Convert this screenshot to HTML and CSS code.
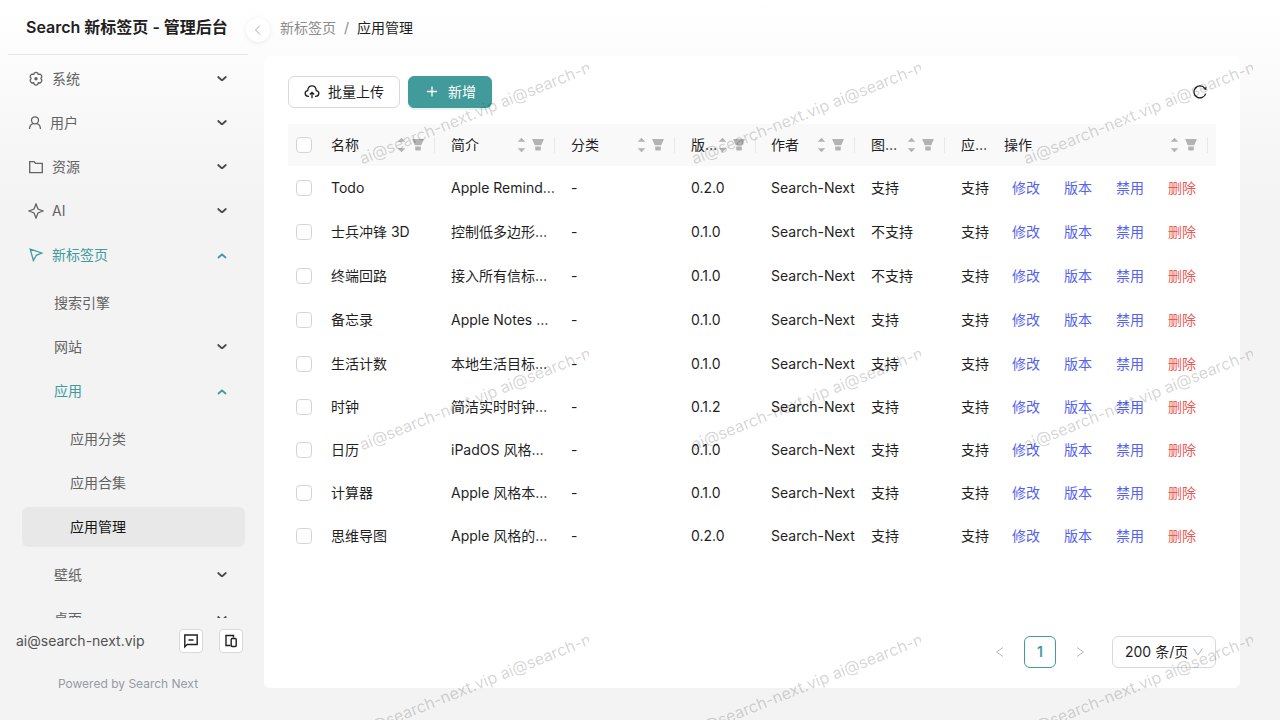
FILE: index.html
```html
<!DOCTYPE html>
<html lang="zh-CN">
<head>
<meta charset="utf-8">
<meta name="viewport" content="width=device-width, initial-scale=1">
<title>Search 新标签页 - 管理后台</title>
<link rel="stylesheet" href="styles.css">
</head>
<body>
<svg class="sprite" aria-hidden="true">
  <symbol id="down" viewBox="0 0 10 10"><path d="M1.200 3L4.200 5.700Q5 6.300 5.800 5.700L8.800 3" fill="none" stroke="currentColor" stroke-width="1.800" stroke-linecap="round"/></symbol>
  <symbol id="up" viewBox="0 0 10 10"><path d="M1.500 7.500L5 4.300L8.500 7.500" fill="none" stroke="currentColor" stroke-width="1.800" stroke-linecap="round" stroke-linejoin="round"/></symbol>
  <symbol id="sort" viewBox="0 0 10 16"><path d="M5.500 .8L9.300 4.800H1.700zM5.500 15.200L9.300 11.200H1.700z" fill="currentColor"/></symbol>
  <symbol id="filter" viewBox="0 0 12 12"><path d="M.6 0H11.400Q12 0 11.800 .6L9.200 6.300H2.800L.2 .6Q0 0 .6 0zM3.200 7.600H8.800V10.800Q8.800 11.600 8 11.600H4Q3.200 11.600 3.200 10.800z" fill="currentColor"/></symbol>
</svg>
<div class="app">
  <aside class="sidebar">
    <h1 class="brand">Search 新标签页 - 管理后台</h1>
    <nav class="nav" aria-label="主菜单">
      <ul class="menu">
        <li><button class="item"><svg class="icon" viewBox="0 0 16 16"><path d="M6.300 2Q8 .9 9.700 2L10.200 3.400L12 3.200Q13.700 4 13.900 5.900L12.900 7.500L13.900 9.100Q13.900 11 12.200 12L10.300 11.800L9.700 13.500Q8 14.700 6.300 13.500L5.700 11.800L3.800 12Q2.100 11 2.100 9.100L3.100 7.500L2.100 5.900Q2.300 4 4 3.200L5.800 3.400z"/><circle cx="8" cy="7.700" r="1.700" class="solid"/></svg><span>系统</span><svg class="arrow"><use href="#down"/></svg></button></li>
        <li><button class="item"><svg class="icon slim" viewBox="0 0 14 16"><circle cx="7" cy="5.300" r="3.500"/><path d="M1.500 14Q1.700 9.300 5.200 8.600M12.500 14Q12.300 9.300 8.800 8.600"/></svg><span>用户</span><svg class="arrow"><use href="#down"/></svg></button></li>
        <li><button class="item"><svg class="icon" viewBox="0 0 16 16"><path d="M1.700 2.700H6L7.600 4.400H14.300V13.600H1.700z"/></svg><span>资源</span><svg class="arrow"><use href="#down"/></svg></button></li>
        <li><button class="item"><svg class="icon" viewBox="0 0 16 16"><path d="M8 1L10 6L15 8L10 10L8 15L6 10L1 8L6 6z"/></svg><span>AI</span><svg class="arrow"><use href="#down"/></svg></button></li>
        <li><button class="item open" aria-expanded="true"><svg class="icon" viewBox="0 0 16 16"><path d="M2.200 2.200L13.800 6L8.300 8.300L5.400 13.500z"/></svg><span>新标签页</span><svg class="arrow"><use href="#up"/></svg></button>
          <ul class="menu sub">
            <li><button class="item">搜索引擎</button></li>
            <li><button class="item"><span>网站</span><svg class="arrow"><use href="#down"/></svg></button></li>
            <li><button class="item open" aria-expanded="true"><span>应用</span><svg class="arrow"><use href="#up"/></svg></button>
              <ul class="menu sub deep">
                <li><button class="item">应用分类</button></li>
                <li><button class="item">应用合集</button></li>
                <li><button class="item current" aria-current="page">应用管理</button></li>
              </ul>
            </li>
            <li><button class="item"><span>壁纸</span><svg class="arrow"><use href="#down"/></svg></button></li>
            <li><button class="item"><span>桌面</span><svg class="arrow"><use href="#down"/></svg></button></li>
          </ul>
        </li>
      </ul>
    </nav>
    <div class="account">
      <span class="email">ai@search-next.vip</span>
      <button class="square" aria-label="消息"><svg viewBox="0 0 16 16"><path d="M1.800 2H14.200V11.500H4.200L1.800 13.800zM5.500 7H10.500"/></svg></button>
      <button class="square" aria-label="设备"><svg viewBox="0 0 16 16"><path d="M10.500 4.500V2.500H3V12.500H7.500"/><rect x="8.200" y="5.500" width="5" height="8" rx="1"/></svg></button>
    </div>
    <p class="powered">Powered by Search Next</p>
    <button class="collapse" aria-label="收起菜单"><svg viewBox="0 0 12 12"><path d="M8 1.500L3.500 6L8 10.500"/></svg></button>
  </aside>
  <main class="main">
    <nav class="crumbs" aria-label="面包屑"><a href="#">新标签页</a><span class="slash">/</span><span class="here">应用管理</span></nav>
    <section class="card">
      <div class="toolbar">
        <button class="btn"><svg viewBox="0 0 16 16"><path d="M5 12.300H4.300C.5 12.300 0 7.200 3.700 6.600C4.300 .4 11.700 .4 12.300 6.600C16 7.200 15.500 12.300 11.700 12.300H11M8 14.300V8.500M5.800 10.500L8 8.300L10.200 10.500"/></svg>批量上传</button>
        <button class="btn primary"><svg viewBox="0 0 16 16"><path d="M8 2.500V12.500M3 7.500H13"/></svg>新增</button>
        <button class="reload" aria-label="刷新"><svg viewBox="0 0 16 16"><path d="M13.700 9.600A6 6 0 1 1 12.800 4.400"/><path d="M14.400 2.800V6L11.300 5.300z" class="solid"/></svg></button>
      </div>
      <div class="table-area">
      <table class="table">
        <colgroup><col class="c-check"><col class="c-wide"><col class="c-wide"><col class="c-wide"><col class="c-version"><col class="c-author"><col class="c-icon"><col class="c-app"><col></colgroup>
        <thead><tr>
          <th><input type="checkbox" aria-label="全选"></th>
          <th><div class="head">名称<span class="tools"><svg class="sort"><use href="#sort"/></svg><svg class="filter"><use href="#filter"/></svg></span></div></th>
          <th><div class="head">简介<span class="tools"><svg class="sort"><use href="#sort"/></svg><svg class="filter"><use href="#filter"/></svg></span></div></th>
          <th><div class="head">分类<span class="tools"><svg class="sort"><use href="#sort"/></svg><svg class="filter"><use href="#filter"/></svg></span></div></th>
          <th><div class="head">版…<span class="tools"><svg class="sort"><use href="#sort"/></svg><svg class="filter"><use href="#filter"/></svg></span></div></th>
          <th><div class="head">作者<span class="tools"><svg class="sort"><use href="#sort"/></svg><svg class="filter"><use href="#filter"/></svg></span></div></th>
          <th><div class="head">图…<span class="tools"><svg class="sort"><use href="#sort"/></svg><svg class="filter"><use href="#filter"/></svg></span></div></th>
          <th>应…</th>
          <th><div class="head">操作<span class="tools"><svg class="sort"><use href="#sort"/></svg><svg class="filter"><use href="#filter"/></svg></span></div></th>
        </tr></thead>
        <tbody class="roomy">
          <tr><td><input type="checkbox" aria-label="选择 Todo"></td><td>Todo</td><td>Apple Remind…</td><td>-</td><td>0.2.0</td><td>Search-Next</td><td>支持</td><td>支持</td><td><div class="actions"><button>修改</button><button>版本</button><button>禁用</button><button class="danger">删除</button></div></td></tr>
          <tr><td><input type="checkbox" aria-label="选择 士兵冲锋 3D"></td><td>士兵冲锋 3D</td><td>控制低多边形…</td><td>-</td><td>0.1.0</td><td>Search-Next</td><td>不支持</td><td>支持</td><td><div class="actions"><button>修改</button><button>版本</button><button>禁用</button><button class="danger">删除</button></div></td></tr>
          <tr><td><input type="checkbox" aria-label="选择 终端回路"></td><td>终端回路</td><td>接入所有信标…</td><td>-</td><td>0.1.0</td><td>Search-Next</td><td>不支持</td><td>支持</td><td><div class="actions"><button>修改</button><button>版本</button><button>禁用</button><button class="danger">删除</button></div></td></tr>
          <tr><td><input type="checkbox" aria-label="选择 备忘录"></td><td>备忘录</td><td>Apple Notes …</td><td>-</td><td>0.1.0</td><td>Search-Next</td><td>支持</td><td>支持</td><td><div class="actions"><button>修改</button><button>版本</button><button>禁用</button><button class="danger">删除</button></div></td></tr>
        </tbody>
        <tbody>
          <tr><td><input type="checkbox" aria-label="选择 生活计数"></td><td>生活计数</td><td>本地生活目标…</td><td>-</td><td>0.1.0</td><td>Search-Next</td><td>支持</td><td>支持</td><td><div class="actions"><button>修改</button><button>版本</button><button>禁用</button><button class="danger">删除</button></div></td></tr>
          <tr><td><input type="checkbox" aria-label="选择 时钟"></td><td>时钟</td><td>简洁实时时钟…</td><td>-</td><td>0.1.2</td><td>Search-Next</td><td>支持</td><td>支持</td><td><div class="actions"><button>修改</button><button>版本</button><button>禁用</button><button class="danger">删除</button></div></td></tr>
          <tr><td><input type="checkbox" aria-label="选择 日历"></td><td>日历</td><td>iPadOS 风格…</td><td>-</td><td>0.1.0</td><td>Search-Next</td><td>支持</td><td>支持</td><td><div class="actions"><button>修改</button><button>版本</button><button>禁用</button><button class="danger">删除</button></div></td></tr>
          <tr><td><input type="checkbox" aria-label="选择 计算器"></td><td>计算器</td><td>Apple 风格本…</td><td>-</td><td>0.1.0</td><td>Search-Next</td><td>支持</td><td>支持</td><td><div class="actions"><button>修改</button><button>版本</button><button>禁用</button><button class="danger">删除</button></div></td></tr>
          <tr><td><input type="checkbox" aria-label="选择 思维导图"></td><td>思维导图</td><td>Apple 风格的…</td><td>-</td><td>0.2.0</td><td>Search-Next</td><td>支持</td><td>支持</td><td><div class="actions"><button>修改</button><button>版本</button><button>禁用</button><button class="danger">删除</button></div></td></tr>
        </tbody>
      </table>
      </div>
      <div class="pager">
        <button class="page" aria-label="上一页"><svg viewBox="0 0 12 12"><path d="M9 1.500L2.500 6L9 10.500"/></svg></button>
        <button class="page active">1</button>
        <button class="page" aria-label="下一页"><svg viewBox="0 0 12 12"><path d="M3 1.500L9.500 6L3 10.500"/></svg></button>
        <div class="size"><select aria-label="每页条数"><option>200 条/页</option></select><svg viewBox="0 0 12 12"><path d="M1.500 2.500L6 9L10.500 2.500"/></svg></div>
      </div>
    </section>
  </main>
  <div class="watermark" aria-hidden="true">
    <div class="tile"><span>ai@search-next.vip ai@search-next.vip</span></div><div class="tile"><span>ai@search-next.vip ai@search-next.vip</span></div><div class="tile"><span>ai@search-next.vip ai@search-next.vip</span></div>
    <div class="tile"><span>ai@search-next.vip ai@search-next.vip</span></div><div class="tile"><span>ai@search-next.vip ai@search-next.vip</span></div><div class="tile"><span>ai@search-next.vip ai@search-next.vip</span></div>
    <div class="tile"><span>ai@search-next.vip ai@search-next.vip</span></div><div class="tile"><span>ai@search-next.vip ai@search-next.vip</span></div><div class="tile"><span>ai@search-next.vip ai@search-next.vip</span></div>
  </div>
</div>
</body>
</html>
```
FILE: styles.css
```css
* { box-sizing: border-box; }
body {
  margin: 0;
  font: 14px/22px Inter, "Noto Sans CJK SC", sans-serif;
  color: #1f1f1f;
  background: #f3f3f3;
}
button, select, input { font: inherit; color: inherit; margin: 0; }
button { border: 0; padding: 0; background: none; cursor: pointer; }
ul, h1, p { margin: 0; padding: 0; list-style: none; }
a { color: inherit; text-decoration: none; }
svg { flex: none; fill: none; stroke: currentColor; }
svg use { stroke: none; }
.solid { fill: currentColor; stroke: none; }
.sprite { position: absolute; width: 0; height: 0; }

.app {
  position: relative;
  display: flex;
  height: 100vh;
  overflow: hidden;
  background: linear-gradient(#fff, #f3f3f3 28%);
}

/* Sidebar */
.sidebar {
  position: relative;
  display: flex;
  flex-direction: column;
  flex: none;
  width: 256px;
  padding: 0 8px 16px;
}
.brand {
  height: 55px;
  padding-left: 18px;
  border-bottom: 1px solid #e8e8e8;
  font-size: 16px;
  font-weight: 600;
  line-height: 54px;
  white-space: nowrap;
}
.nav { flex: 1; min-height: 0; overflow: hidden; padding: 4px 3px 0 14px; }
.menu, .menu li { display: flex; flex-direction: column; gap: 4px; }
.menu.sub { padding: 4px 0; }
.item {
  display: flex;
  align-items: center;
  gap: 8px;
  width: 100%;
  height: 40px;
  padding: 0 18px 0 6px;
  border-radius: 6px;
  color: #636363;
  text-align: left;
}
.sub .item { padding-left: 32px; }
.deep .item { padding-left: 48px; }
.item.open { color: #419b9b; }
.item.current { background: #e8e8e8; color: #141414; }
.icon { width: 16px; height: 16px; stroke-width: 1.3; }
.icon.slim { width: 14px; }
.arrow { width: 10px; height: 10px; margin-left: auto; color: #4a4a4a; }
.open .arrow { color: #419b9b; }
.account { display: flex; align-items: center; height: 46px; padding: 0 5px 0 8px; gap: 16px; }
.email { flex: 1; color: #525252; }
.square {
  display: grid;
  place-items: center;
  width: 24px;
  height: 24px;
  border: 1px solid #d9d9d9;
  border-radius: 4px;
  background: #fff;
}
.square svg { width: 16px; height: 16px; stroke-width: 1.4; }
.powered { font-size: 12px; line-height: 40px; text-align: center; color: #959ba5; }
.collapse {
  position: absolute;
  top: 18px;
  right: -14px;
  display: grid;
  place-items: center;
  width: 24px;
  height: 24px;
  border-radius: 50%;
  background: #fff;
  box-shadow: 0 1px 5px rgba(0, 0, 0, .08);
  color: #aaa;
}
.collapse svg { width: 12px; height: 12px; }

/* Main area */
.main { flex: 1; min-width: 0; display: flex; flex-direction: column; padding: 0 40px 32px 8px; }
.crumbs { display: flex; gap: 8px; padding-left: 16px; line-height: 56px; color: #8c8c8c; }
.here { color: #1f1f1f; }
.card {
  flex: 1;
  min-height: 0;
  display: flex;
  flex-direction: column;
  padding: 20px 24px;
  border-radius: 6px;
  background: #fff;
}
.toolbar { display: flex; gap: 8px; margin-bottom: 16px; }
.btn {
  display: flex;
  align-items: center;
  gap: 8px;
  height: 32px;
  padding: 0 15px;
  border: 1px solid #d9d9d9;
  border-radius: 6px;
  background: #fff;
}
.btn svg { width: 16px; height: 16px; stroke-width: 1.3; }
.btn.primary { border-color: #419b9b; background: #419b9b; color: #fff; box-shadow: 0 2px 0 rgba(65, 155, 155, .12); }
.reload { display: grid; place-items: center; width: 32px; height: 32px; margin-left: auto; }
.reload svg { width: 16px; height: 16px; stroke-width: 1.3; }

.table-area { flex: 1; min-height: 0; overflow: hidden; }
.table { width: 100%; table-layout: fixed; border-collapse: collapse; }
.c-check { width: 35px; }
.c-wide { width: 120px; }
.c-version { width: 80px; }
.c-author { width: 100px; }
.c-icon { width: 90px; }
.c-app { width: 43px; }
th, td { height: 43px; padding: 0 8px; font-weight: 400; text-align: left; white-space: nowrap; }
th { height: 42px; background: #f9f9f9; }
.roomy td { height: 44px; }
.head { display: flex; align-items: center; }
.tools {
  display: flex;
  align-items: center;
  gap: 6px;
  height: 16px;
  margin-left: auto;
  padding-right: 10px;
  border-right: 1px solid #e8e8e8;
  color: #b3b3b3;
}
.sort { width: 10px; height: 16px; }
.filter { width: 12px; height: 12px; }
th input, td input {
  display: block;
  appearance: none;
  width: 16px;
  height: 16px;
  border: 1px solid #d4d4d4;
  border-radius: 4px;
  background: #fff;
}
.actions { display: flex; gap: 8px; color: #5563f0; }
.actions button { padding: 0 8px; }
.actions .danger { color: #ea5a55; }

.pager { display: flex; justify-content: flex-end; gap: 8px; }
.page { display: grid; place-items: center; width: 32px; height: 32px; border-radius: 6px; color: #b8b8b8; }
.page svg { width: 12px; height: 12px; }
.page.active { border: 1px solid #419b9b; color: #419b9b; font-weight: 600; }
.size { position: relative; margin-left: 8px; }
.size select {
  appearance: none;
  width: 104px;
  height: 32px;
  padding: 0 12px;
  border: 1px solid #d9d9d9;
  border-radius: 6px;
  background: #fff;
}
.size svg { position: absolute; top: 10px; right: 12px; width: 12px; height: 12px; color: #b8b8b8; }

/* Repeating watermark laid over the whole page */
.watermark {
  position: absolute;
  top: 0;
  left: 257px;
  display: grid;
  grid-template-columns: repeat(3, 332px);
  grid-auto-rows: 286px;
  pointer-events: none;
}
.tile { position: relative; overflow-x: clip; }
.tile span {
  position: absolute;
  left: 103px;
  top: 149px;
  font-size: 16px;
  line-height: 20px;
  white-space: nowrap;
  color: rgba(0, 0, 0, .18);
  transform: rotate(-22deg);
  transform-origin: left center;
}
```
